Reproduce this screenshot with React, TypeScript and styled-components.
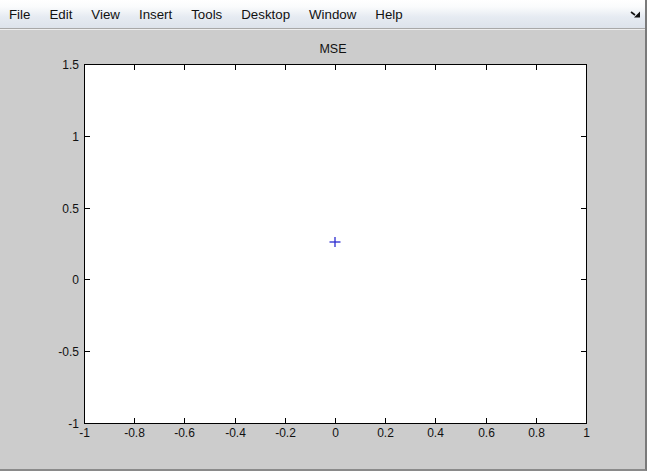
import { FC } from 'react'
import styled, { createGlobalStyle } from 'styled-components'

const GlobalStyle = createGlobalStyle`
    html, body {
        margin: 0;
        padding: 0;
        background: #ffffff;
    }
    body {
        font-family: "Liberation Sans", Arial, sans-serif;
    }
`

const menuItems = ['File', 'Edit', 'View', 'Insert', 'Tools', 'Desktop', 'Window', 'Help']

// axes box in figure coordinates
const AX = { left: 84, top: 34, right: 586, bottom: 393 }
const xTicks = [-1, -0.8, -0.6, -0.4, -0.2, 0, 0.2, 0.4, 0.6, 0.8, 1]
const yTicks = [-1, -0.5, 0, 0.5, 1, 1.5]

const xPos = (v: number) => AX.left + ((v + 1) / 2) * (AX.right - AX.left)
const yPos = (v: number) => AX.bottom - ((v + 1) / 2.5) * (AX.bottom - AX.top)
const fmt = (v: number) => (Math.abs(v) < 1e-9 ? '0' : String(Math.round(v * 10) / 10))

const App: FC = () => {
    return (
        <>
            <GlobalStyle />
            <Window>
                <MenuBar>
                    <MenuList>
                        {menuItems.map((m) => (
                            <MenuItem key={m}>{m}</MenuItem>
                        ))}
                    </MenuList>
                    <DockButton aria-label="dock">
                        <svg width="11" height="7" viewBox="0 0 11 7">
                            <path d="M1 1 L5 4" stroke="#111" strokeWidth="1.6" />
                            <path d="M10 0.5 L10 6.5 L4 6.5 Z" fill="#111" />
                        </svg>
                    </DockButton>
                </MenuBar>
                <Figure>
                    <svg width="645" height="440" viewBox="0 0 645 440">
                        <text x="333" y="23" fontSize="12.5" textAnchor="middle" fill="#111" fontFamily="Liberation Sans, Arial, sans-serif">MSE</text>
                        <rect
                            x={AX.left + 0.5}
                            y={AX.top + 0.5}
                            width={AX.right - AX.left}
                            height={AX.bottom - AX.top}
                            fill="#ffffff"
                            stroke="#000"
                            strokeWidth="1"
                        />
                        {xTicks.map((t) => {
                            const x = Math.round(xPos(t)) + 0.5
                            return (
                                <g key={'x' + t}>
                                    <line x1={x} x2={x} y1={AX.bottom + 0.5} y2={AX.bottom - 5} stroke="#000" />
                                    <line x1={x} x2={x} y1={AX.top + 0.5} y2={AX.top + 6} stroke="#000" />
                                    <text x={x} y={AX.bottom + 14} fontSize="12" textAnchor="middle" fill="#111" fontFamily="Liberation Sans, Arial, sans-serif">
                                        {fmt(t)}
                                    </text>
                                </g>
                            )
                        })}
                        {yTicks.map((t) => {
                            const y = Math.round(yPos(t)) + 0.5
                            return (
                                <g key={'y' + t}>
                                    <line x1={AX.left + 0.5} x2={AX.left + 6} y1={y} y2={y} stroke="#000" />
                                    <line x1={AX.right + 0.5} x2={AX.right - 5} y1={y} y2={y} stroke="#000" />
                                    <text x={AX.left - 5} y={y + 4} fontSize="12" textAnchor="end" fill="#111" fontFamily="Liberation Sans, Arial, sans-serif">
                                        {fmt(t)}
                                    </text>
                                </g>
                            )
                        })}
                        <g stroke="#2a2ad0" strokeWidth="1.3">
                            <line x1="329.5" x2="340.5" y1="212" y2="212" />
                            <line x1="335" x2="335" y1="207" y2="217" />
                        </g>
                    </svg>
                </Figure>
            </Window>
        </>
    )
}

const Window = styled.div`
    width: 645px;
    height: 469px;
    display: flex;
    flex-direction: column;
    border-right: 2px solid #7a7a7a;
    border-bottom: 2px solid #8a8a8a;
    background: #cccccc;
`

const MenuBar = styled.div`
    height: 28px;
    display: flex;
    align-items: center;
    justify-content: space-between;
    background: linear-gradient(to bottom, #ffffff 0%, #fafbfc 25%, #e6ebf2 60%, #dde3eb 100%);
    border-bottom: 1px solid #a8a8a8;
    box-shadow: 0 1px 0 #eeeeee;
`

const MenuList = styled.ul`
    list-style: none;
    display: flex;
    margin: 0;
    padding: 0;
`

const MenuItem = styled.li`
    font-family: "Liberation Sans", Arial, sans-serif;
    font-size: 13.3px;
    color: #111111;
    padding: 1px 10px 0 9px;
    line-height: 16px;
`

const DockButton = styled.div`
    display: flex;
    align-items: center;
    margin-right: 4px;
`

const Figure = styled.div`
    flex: 1;
    margin-top: 1px;
    overflow: hidden;
    background: #cccccc;
`

export default App
